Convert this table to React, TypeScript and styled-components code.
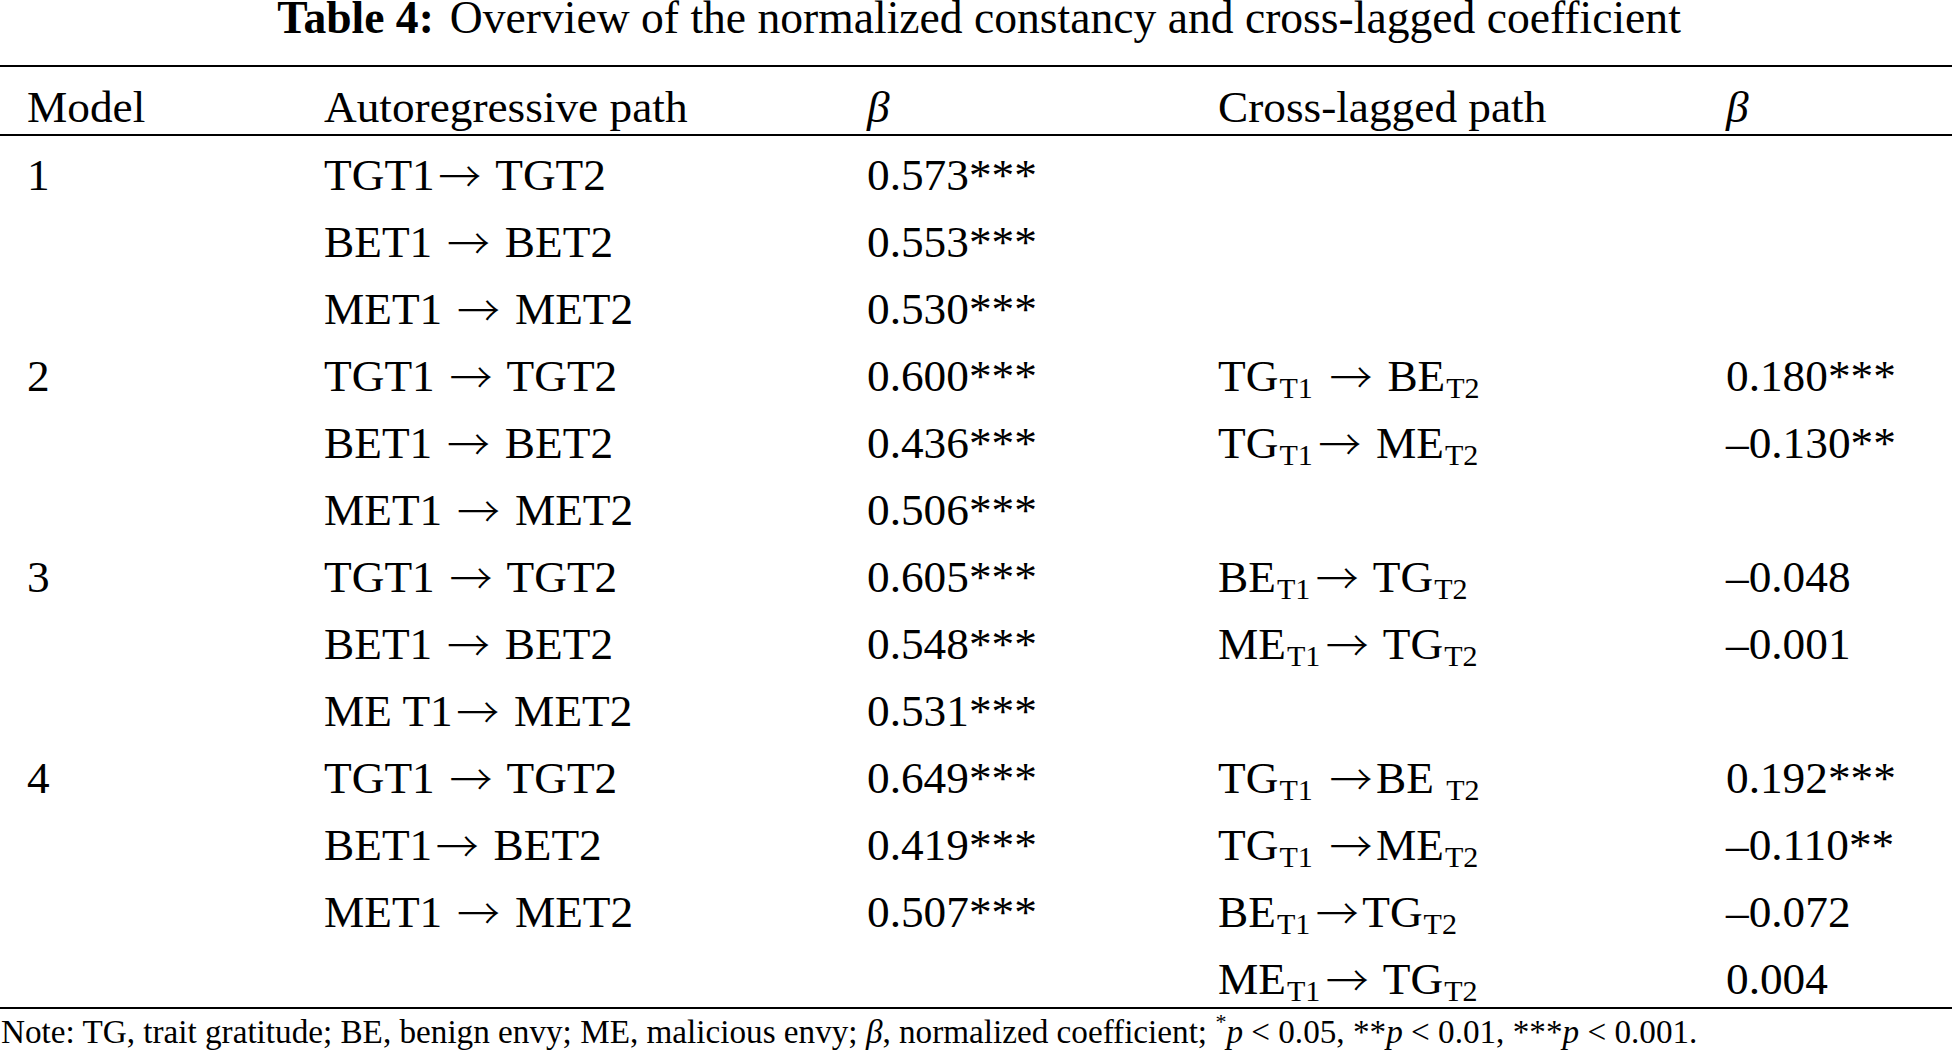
import React from "react";
import styled, { createGlobalStyle } from "styled-components";

const GlobalStyle = createGlobalStyle`
  html, body {
    margin: 0;
    padding: 0;
    background: #ffffff;
  }
  body {
    font-family: "Liberation Serif", "Times New Roman", serif;
    color: #000000;
  }
`;

const Page = styled.div`
  width: 1952px;
  box-sizing: border-box;
`;

const Title = styled.h1`
  margin: 0 0 29px 0;
  padding-left: 6px;
  height: 36px;
  font-size: 45.6px;
  line-height: 36px;
  font-weight: 400;
  text-align: center;
  white-space: nowrap;
`;

const TitleLabel = styled.b`
  font-weight: 700;
  margin-right: 16px;
`;

const Table = styled.div`
  border-top: 2px solid #000;
  border-bottom: 2px solid #000;
  font-size: 45.3px;
`;

const Grid = styled.div`
  display: grid;
  grid-template-columns: 297px 543px 351px 508px 1fr;
  padding-left: 27px;
  box-sizing: border-box;
  line-height: 50px;
  white-space: nowrap;
`;

const HeaderRow = styled(Grid)`
  padding-top: 15px;
  padding-bottom: 2px;
  border-bottom: 2px solid #000;
`;

const Row = styled(Grid)`
  height: 67px;
  padding-top: 14px;
`;

const Cell = styled.div<{ $italic?: boolean }>`
  font-style: ${(p) => (p.$italic ? "italic" : "normal")};
`;

const Sub = styled.span`
  font-size: 30px;
  line-height: 1;
  vertical-align: -6.6px;
  margin: 0 2px 0 1px;
`;

const Arrow = styled.span`
  font-family: "Noto Sans CJK JP", "DejaVu Sans", sans-serif;
  font-weight: 300;
  font-size: 43px;
  line-height: 1;
  vertical-align: -3px;
  margin: 0 3.5px;
`;

const Note = styled.p`
  margin: 2px 0 0 0;
  padding-left: 1px;
  font-size: 33.2px;
  line-height: 36.5px;
  white-space: nowrap;
`;

const Em = styled.i`
  font-style: italic;
`;

const Sup = styled.sup`
  font-size: 22px;
  line-height: 1;
  vertical-align: 14px;
`;

type Part = string | [string, string];

const renderText = (s: string, key: string) =>
  s.split("\u2192").flatMap((seg, j, arr) =>
    j < arr.length - 1
      ? [
          <React.Fragment key={`${key}-t${j}`}>{seg}</React.Fragment>,
          <Arrow key={`${key}-a${j}`}>{"\u2192"}</Arrow>,
        ]
      : [<React.Fragment key={`${key}-t${j}`}>{seg}</React.Fragment>]
  );

const Path = ({ parts }: { parts: Part[] }) => (
  <>
    {parts.map((p, i) =>
      typeof p === "string" ? (
        <React.Fragment key={i}>{renderText(p, `p${i}`)}</React.Fragment>
      ) : (
        <React.Fragment key={i}>
          {p[0]}
          <Sub>{p[1]}</Sub>
        </React.Fragment>
      )
    )}
  </>
);

interface RowData {
  model?: string;
  auto?: string;
  beta?: string;
  cross?: Part[];
  beta2?: string;
}

const rows: RowData[] = [
  { model: "1", auto: "TGT1\u2192 TGT2", beta: "0.573***" },
  { auto: "BET1 \u2192 BET2", beta: "0.553***" },
  { auto: "MET1 \u2192 MET2", beta: "0.530***" },
  {
    model: "2",
    auto: "TGT1 \u2192 TGT2",
    beta: "0.600***",
    cross: [["TG", "T1"], " \u2192 ", ["BE", "T2"]],
    beta2: "0.180***",
  },
  {
    auto: "BET1 \u2192 BET2",
    beta: "0.436***",
    cross: [["TG", "T1"], "\u2192 ", ["ME", "T2"]],
    beta2: "\u20130.130**",
  },
  { auto: "MET1 \u2192 MET2", beta: "0.506***" },
  {
    model: "3",
    auto: "TGT1 \u2192 TGT2",
    beta: "0.605***",
    cross: [["BE", "T1"], "\u2192 ", ["TG", "T2"]],
    beta2: "\u20130.048",
  },
  {
    auto: "BET1 \u2192 BET2",
    beta: "0.548***",
    cross: [["ME", "T1"], "\u2192 ", ["TG", "T2"]],
    beta2: "\u20130.001",
  },
  { auto: "ME T1\u2192 MET2", beta: "0.531***" },
  {
    model: "4",
    auto: "TGT1 \u2192 TGT2",
    beta: "0.649***",
    cross: [["TG", "T1"], " \u2192", ["BE ", "T2"]],
    beta2: "0.192***",
  },
  {
    auto: "BET1\u2192 BET2",
    beta: "0.419***",
    cross: [["TG", "T1"], " \u2192", ["ME", "T2"]],
    beta2: "\u20130.110**",
  },
  {
    auto: "MET1 \u2192 MET2",
    beta: "0.507***",
    cross: [["BE", "T1"], "\u2192", ["TG", "T2"]],
    beta2: "\u20130.072",
  },
  {
    cross: [["ME", "T1"], "\u2192 ", ["TG", "T2"]],
    beta2: "0.004",
  },
];

export default function App() {
  return (
    <Page>
      <GlobalStyle />
      <Title>
        <TitleLabel>Table 4:</TitleLabel>
        Overview of the normalized constancy and cross-lagged coefficient
      </Title>
      <Table>
        <HeaderRow>
          <Cell>Model</Cell>
          <Cell>Autoregressive path</Cell>
          <Cell $italic>β</Cell>
          <Cell>Cross-lagged path</Cell>
          <Cell $italic>β</Cell>
        </HeaderRow>
        {rows.map((r, i) => (
          <Row key={i}>
            <Cell>{r.model ?? ""}</Cell>
            <Cell>{r.auto ? renderText(r.auto, `a${i}`) : ""}</Cell>
            <Cell>{r.beta ?? ""}</Cell>
            <Cell>{r.cross ? <Path parts={r.cross} /> : ""}</Cell>
            <Cell>{r.beta2 ?? ""}</Cell>
          </Row>
        ))}
      </Table>
      <Note>
        Note: TG, trait gratitude; BE, benign envy; ME, malicious envy;{" "}
        <Em>β</Em>, normalized coefficient; <Sup>*</Sup>
        <Em>p</Em> &lt; 0.05, **<Em>p</Em> &lt; 0.01, ***<Em>p</Em> &lt; 0.001.
      </Note>
    </Page>
  );
}
